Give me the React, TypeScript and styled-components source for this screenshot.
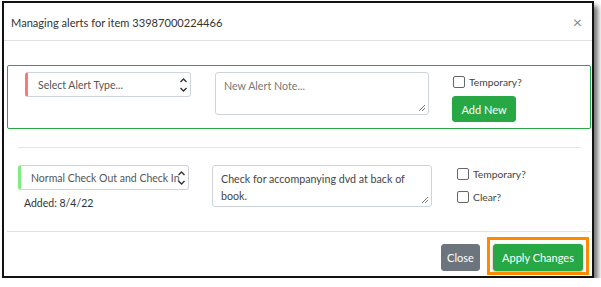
import React from "react";
import styled, { createGlobalStyle } from "styled-components";

const Global = createGlobalStyle`
  html, body { margin: 0; padding: 0; background: #ffffff; }
  body { font-family: Lato, "Noto Sans", sans-serif; color: #333; }
  * { box-sizing: border-box; }
`;

const Dialog = styled.div`
  margin: 1px 0 0 2px;
  width: 592px;
  height: 277px;
  border: 2px solid #111;
  background: #fff;
  box-shadow: 4px 5px 5px rgba(0, 0, 0, 0.55);
  display: flex;
  flex-direction: column;
`;

const Header = styled.div`
  height: 38px;
  border-bottom: 1px solid #e2e2e2;
  display: flex;
  align-items: center;
  justify-content: space-between;
  padding: 1px 10px 0 7px;
  flex: none;
`;

const Title = styled.div`
  font-size: 11.1px;
  color: #333;
`;

const CloseX = styled.div`
  font-size: 16px;
  color: #888;
  line-height: 1;
`;

const Body = styled.div`
  flex: 1;
  padding: 24px 1px 0 3px;
  display: flex;
  flex-direction: column;
`;

const NewBox = styled.div`
  border: 1px solid #28a745;
  border-radius: 2px;
  padding: 6px 0 6px 17px;
  display: flex;
  align-items: flex-start;
`;

const SelectBox = styled.div<{ $accent: string; $w: number; $pl: number }>`
  width: ${(p) => p.$w}px;
  height: 25px;
  border: 1px solid #cfd4da;
  border-left: 3px solid ${(p) => p.$accent};
  border-radius: 3px;
  display: flex;
  align-items: center;
  padding-left: ${(p) => p.$pl}px;
  font-size: 10.5px;
  color: #555;
  position: relative;
  overflow: hidden;
  white-space: nowrap;
  flex: none;
`;

const Arrows = styled.svg`
  position: absolute;
  right: 2px;
  top: 4px;
`;

const NoteArea = styled.div<{ $w: number; $h: number; $ml: number; $muted?: boolean }>`
  width: ${(p) => p.$w}px;
  height: ${(p) => p.$h}px;
  margin-left: ${(p) => p.$ml}px;
  border: 1px solid #cfd4da;
  border-radius: 3px;
  padding: 4px 8px;
  font-size: 10.7px;
  line-height: 17px;
  color: ${(p) => (p.$muted ? "#777" : "#444")};
  position: relative;
  flex: none;
`;

const Grip = styled.svg`
  position: absolute;
  right: 2px;
  bottom: 2px;
`;

const Side = styled.div<{ $ml: number }>`
  margin-left: ${(p) => p.$ml}px;
  display: flex;
  flex-direction: column;
  align-items: flex-start;
`;

const Check = styled.label<{ $mt: number }>`
  display: flex;
  align-items: center;
  gap: 4px;
  font-size: 10.3px;
  color: #444;
  margin-top: ${(p) => p.$mt}px;
  line-height: 14px;
`;

const Box = styled.span`
  width: 12px;
  height: 12px;
  border: 1px solid #666;
  border-radius: 2px;
  background: #fff;
  display: inline-block;
`;

const GreenButton = styled.button`
  background: #28a745;
  border: 1px solid #28a745;
  color: #fff;
  border-radius: 3px;
  font-family: inherit;
  font-size: 11px;
  padding: 0;
  height: 26px;
`;

const AddButton = styled(GreenButton)`
  width: 64px;
  margin-top: 7px;
  margin-left: -1px;
`;

const Divider = styled.div`
  height: 1px;
  background: #e4e4e4;
  margin: 18px 10px 0 11px;
`;

const Row = styled.div`
  display: flex;
  align-items: flex-start;
  margin-top: 17px;
  padding-left: 11px;
`;

const Col = styled.div`
  display: flex;
  flex-direction: column;
`;

const Added = styled.div`
  font-size: 10.5px;
  line-height: 14px;
  color: #333;
  margin: 6px 0 0 6px;
`;

const Footer = styled.div`
  margin-top: 21px;
  border-top: 1px solid #e2e2e2;
  flex: 1;
  display: flex;
  justify-content: flex-end;
  align-items: flex-start;
  padding: 12px 8px 0 0;
  gap: 13px;
`;

const GrayButton = styled.button`
  background: #6c757d;
  border: 1px solid #6c757d;
  color: #fff;
  border-radius: 3px;
  font-family: inherit;
  font-size: 11px;
  width: 39px;
  height: 27px;
  padding: 0;
`;

const ApplyButton = styled(GreenButton)`
  width: 90px;
  height: 27px;
  position: relative;
  box-shadow: 0 1px 3px rgba(0, 0, 0, 0.35);
  &::after {
    content: "";
    position: absolute;
    left: -7px;
    right: -7px;
    top: -8px;
    bottom: -5px;
    border: 3px solid #ff8a00;
  }
`;

const UpDown = () => (
  <Arrows width="9" height="16" viewBox="0 0 9 16">
    <path d="M1.5 5 L4.5 2 L7.5 5" fill="none" stroke="#333" strokeWidth="1.4" />
    <path d="M1.5 11 L4.5 14 L7.5 11" fill="none" stroke="#333" strokeWidth="1.4" />
  </Arrows>
);

const ResizeGrip = () => (
  <Grip width="8" height="8" viewBox="0 0 8 8">
    <path d="M7 1 L1 7 M7 4 L4 7" stroke="#777" strokeWidth="1" />
  </Grip>
);

export default function App() {
  return (
    <>
      <Global />
      <Dialog>
        <Header>
          <Title>Managing alerts for item 33987000224466</Title>
          <CloseX>×</CloseX>
        </Header>
        <Body>
          <NewBox>
            <SelectBox $accent="#f07c7c" $w={166} $pl={10}>
              Select Alert Type...
              <UpDown />
            </SelectBox>
            <NoteArea $w={214} $h={43} $ml={24} $muted>
              New Alert Note...
              <ResizeGrip />
            </NoteArea>
            <Side $ml={24}>
              <Check $mt={3}>
                <Box />
                Temporary?
              </Check>
              <AddButton>Add New</AddButton>
            </Side>
          </NewBox>
          <Divider />
          <Row>
            <Col>
              <SelectBox $accent="#7ded7d" $w={171} $pl={10}>
                Normal Check Out and Check In
                <UpDown />
              </SelectBox>
              <Added>Added: 8/4/22</Added>
            </Col>
            <NoteArea $w={220} $h={42} $ml={23}>
              Check for accompanying dvd at back of book.
              <ResizeGrip />
            </NoteArea>
            <Side $ml={25}>
              <Check $mt={2}>
                <Box />
                Temporary?
              </Check>
              <Check $mt={9}>
                <Box />
                Clear?
              </Check>
            </Side>
          </Row>
          <Footer>
            <GrayButton>Close</GrayButton>
            <ApplyButton>Apply Changes</ApplyButton>
          </Footer>
        </Body>
      </Dialog>
    </>
  );
}
